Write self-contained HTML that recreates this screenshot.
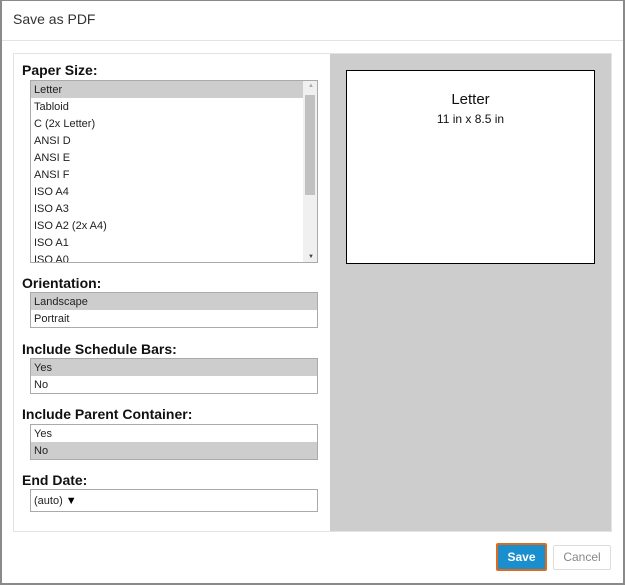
<!DOCTYPE html><html><head><style>
*{box-sizing:border-box;margin:0;padding:0}
body{width:625px;height:585px;background:#fff;font-family:"Liberation Sans",Arial,sans-serif;position:relative;overflow:hidden}
.frame{position:absolute;left:0;top:0;width:625px;height:585px;border:2px solid #8a8a8a;border-top:1px solid #8a8a8a}
.title{position:absolute;left:13px;top:11px;font-size:14px;color:#333}
.hr{position:absolute;left:2px;right:2px;top:40px;height:1px;background:#e3e3e3}
.panel{position:absolute;left:13px;top:53px;width:599px;height:479px;border:1px solid #e3e3e3;background:#fff}
.right{position:absolute;left:330px;top:54px;width:281px;height:477px;background:#cdcdcd}
.prev{position:absolute;left:346px;top:70px;width:249px;height:194px;background:#fff;border:1px solid #000;text-align:center}
.lbl{position:absolute;left:22px;font-size:14px;font-weight:bold;color:#111}
.list{position:absolute;left:30px;width:288px;border:1px solid #aaa;background:#fff;font-size:11px;color:#222;overflow:hidden}
.list div{height:17px;line-height:19px;padding-left:3px}
.sel{background:#cdcdcd}
.btn{position:absolute;font-size:12px;text-align:center;border-radius:2px}
</style></head><body>
<div class="frame"></div>
<div class="title">Save as PDF</div>
<div class="hr"></div>
<div class="panel"></div>
<div class="right"></div>
<div class="prev"><div style="font-size:15px;margin-top:20px;color:#111">Letter</div><div style="font-size:12px;margin-top:4px;color:#111">11 in x 8.5 in</div></div>
<div class="lbl" style="top:62px">Paper Size:</div>
<div class="list" style="top:80px;height:183px">
<div class="sel" style="margin-right:14px">Letter</div><div>Tabloid</div><div>C (2x Letter)</div><div>ANSI D</div><div>ANSI E</div><div>ANSI F</div><div>ISO A4</div><div>ISO A3</div><div>ISO A2 (2x A4)</div><div>ISO A1</div><div>ISO A0</div>
<span style="position:absolute;right:0;top:0;width:14px;height:181px;background:#f0f0f0"></span>
<span style="position:absolute;right:2px;top:14px;width:10px;height:100px;background:#c1c1c1"></span>
<span style="position:absolute;right:3px;top:2px;font-size:6px;color:#aaa">▲</span>
<span style="position:absolute;right:3px;bottom:2px;font-size:6px;color:#444">▼</span>
</div>
<div class="lbl" style="top:275px">Orientation:</div>
<div class="list" style="top:292px;height:36px"><div class="sel">Landscape</div><div>Portrait</div></div>
<div class="lbl" style="top:341px">Include Schedule Bars:</div>
<div class="list" style="top:358px;height:36px"><div class="sel">Yes</div><div>No</div></div>
<div class="lbl" style="top:406px">Include Parent Container:</div>
<div class="list" style="top:424px;height:36px"><div>Yes</div><div class="sel">No</div></div>
<div class="lbl" style="top:472px">End Date:</div>
<div class="list" style="top:489px;height:23px;padding-top:2px"><div>(auto) <span style="color:#000">▼</span></div></div>
<div class="btn" style="left:496px;top:543px;width:51px;height:28px;background:#1a8fce;border:2px solid #e06a1c;color:#fff;line-height:24px;font-weight:bold">Save</div>
<div class="btn" style="left:553px;top:545px;width:58px;height:25px;border:1px solid #ddd;color:#888;line-height:23px">Cancel</div>
</body></html>
